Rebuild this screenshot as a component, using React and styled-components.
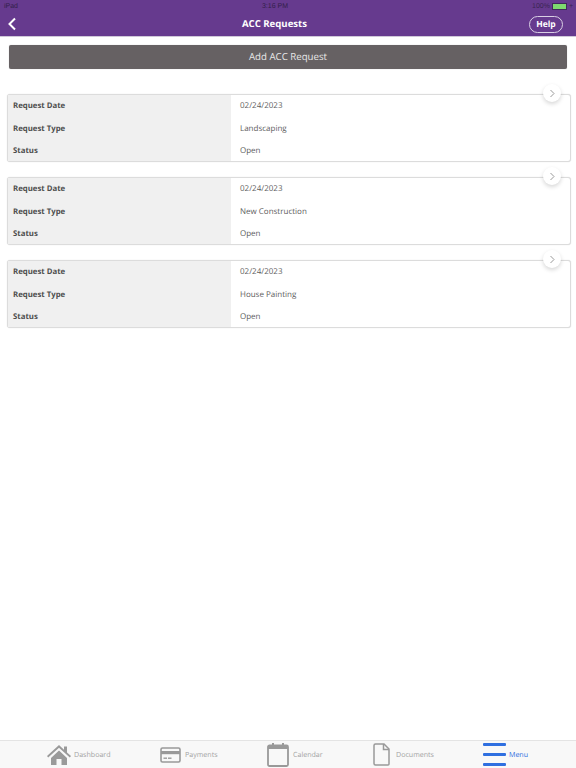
import React from "react";
import styled, { createGlobalStyle } from "styled-components";

const Global = createGlobalStyle`
  html, body { margin: 0; padding: 0; background: #fff; }
  body { font-family: "Open Sans", "Liberation Sans", sans-serif; text-rendering: geometricPrecision; }
`;
const Page = styled.div`
  width: 576px; height: 768px; display: flex; flex-direction: column; overflow: hidden; background: #fff;
`;
const Header = styled.header`
  height: 37px; flex: none; box-sizing: border-box; background: #663a8e; border-bottom: 1px solid #cfc8d8; display: flex; flex-direction: column;
`;
const StatusBar = styled.div`
  height: 12px; padding: 0 3px 0 4px; display: flex; align-items: center; justify-content: space-between;
  font-family: "Liberation Sans", sans-serif; font-size: 7px; color: #33204a;
`;
const BatteryWrap = styled.div`
  display: flex; align-items: center; gap: 2px; color: #3a2552;
`;
const Battery = styled.span`
  width: 13px; height: 5px; background: #7ed96f; border: 0.5px solid #40295a; display: block;
`;
const NavBar = styled.div`
  flex: 1; display: flex; align-items: center; justify-content: space-between; padding: 0 13px 0 7px; position: relative;
`;
const Title = styled.h1`
  position: absolute; left: 0; right: 27px; margin: 0; text-align: center; font-size: 9.6px; font-weight: 700; color: #fff; line-height: 24px;
`;
const HelpButton = styled.div`
  width: 32px; height: 15px; border: 1px solid #d9cfe4; border-radius: 9px; color: #fff; font-size: 8.5px; font-weight: 700;
  display: flex; align-items: center; justify-content: center;
`;
const Content = styled.main`
  flex: 1; display: flex; flex-direction: column; padding: 8px 5px 0 7px;
`;
const AddButton = styled.div`
  margin: 0 4px 0 2px; height: 24px; background: #666163; border-radius: 2px; color: #e8e8e8; font-size: 9.7px; padding-bottom: 1px; box-sizing: border-box;
  display: flex; align-items: center; justify-content: center; box-shadow: 0 0 1px rgba(0,0,0,.3);
`;
const CardList = styled.div`
  margin-top: 25px; display: flex; flex-direction: column; gap: 15px;
`;
const Card = styled.section`
  position: relative; height: 68px; box-sizing: border-box; border: 1px solid #dcdcdc; border-radius: 3px;
  display: grid; grid-template-columns: 223px 1fr; grid-template-rows: 66px; background: #fff; box-shadow: 0 0 1px rgba(0,0,0,.18);
`;
const Labels = styled.div`
  background: #f0f0f0; padding: 2px 5px 0; display: flex; flex-direction: column; justify-content: center; min-height: 0;
`;
const Values = styled.div`
  padding: 2px 9px 0; display: flex; flex-direction: column; justify-content: center; min-height: 0;
`;
const Label = styled.div`
  flex: none; height: 22.4px; line-height: 22.4px; font-size: 7.8px; font-weight: 700; color: #4d4d4d;
`;
const Value = styled.div`
  flex: none; height: 22.4px; line-height: 22.4px; font-size: 8px; color: #5c5c5c;
`;
const Chevron = styled.div`
  position: absolute; top: -11px; right: 9px; width: 18px; height: 18px; border-radius: 50%; background: #fff;
  box-shadow: 0 2px 4px rgba(0,0,0,.16); display: flex; align-items: center; justify-content: center;
`;
const TabBar = styled.nav`
  height: 28px; flex: none; box-sizing: border-box; background: #f8f8f8; border-top: 1px solid #e4e4e4;
  display: flex; padding-left: 47px;
`;
const Tab = styled.div`
  width: ${p => p.$w}px; flex: none; display: flex; align-items: center; gap: ${p => p.$gap}px;
  font-size: 7.1px; color: ${p => (p.$active ? "#2f6fe0" : "#a3a3a3")};
`;

const Back = () => (
  <svg width="10" height="14" viewBox="0 0 10 14"><path d="M8 1.500 2.500 7 8 12.500" fill="none" stroke="#fff" strokeWidth="2" /></svg>
);
const ChevronIcon = () => (
  <svg width="7" height="9" viewBox="0 0 7 9"><path d="M1.500 1 5 4.500 1.500 8" fill="none" stroke="#999" strokeWidth="1" /></svg>
);
const HomeIcon = () => (
  <svg width="24" height="20" viewBox="0 0 24 20" fill="#9a9a9a">
    <path d="M12 0 0 11l1.200 1.400L12 2.800l10.800 9.600L24 11l-4-3.600V1.500h-3v3.200z" />
    <path d="M4 13 12 5.500l8 7.500v7h-5.500v-6h-5v6H4z" />
  </svg>
);
const CardIcon = () => (
  <svg width="21" height="16" viewBox="0 0 21 16">
    <rect x="1" y="1" width="19" height="14" rx="1.500" fill="none" stroke="#999" strokeWidth="1.600" />
    <rect x="1" y="4" width="19" height="3.200" fill="#999" />
    <rect x="3.500" y="10.500" width="3.500" height="1.400" fill="#999" />
    <rect x="8" y="10.500" width="3.500" height="1.400" fill="#999" />
  </svg>
);
const CalendarIcon = () => (
  <svg width="22" height="24" viewBox="0 0 22 24">
    <rect x="1" y="2.500" width="20" height="20.500" rx="1.500" fill="none" stroke="#999" strokeWidth="1.800" />
    <rect x="1" y="2.500" width="20" height="3.500" fill="#999" />
    <rect x="5" y="0" width="2" height="3" fill="#999" />
    <rect x="15" y="0" width="2" height="3" fill="#999" />
  </svg>
);
const DocIcon = () => (
  <svg width="17" height="23" viewBox="0 0 17 23">
    <path d="M2.500 1H11l5 5v15a1 1 0 0 1-1 1H2.500a1.500 1.500 0 0 1-1.500-1.500v-18A1.500 1.500 0 0 1 2.500 1Z" fill="none" stroke="#999" strokeWidth="1.500" />
    <path d="M10.500 1v5.500H16" fill="none" stroke="#999" strokeWidth="1.500" />
  </svg>
);
const MenuIcon = () => (
  <svg width="23" height="23" viewBox="0 0 23 23" fill="#2f6fe0">
    <rect y="0" width="23" height="3" rx="1" />
    <rect y="10" width="23" height="3" rx="1" />
    <rect y="20" width="23" height="3" rx="1" />
  </svg>
);

const requests = ["Landscaping", "New Construction", "House Painting"];
const tabs = [
  { name: "Dashboard", icon: <HomeIcon />, w: 113, gap: 3 },
  { name: "Payments", icon: <CardIcon />, w: 107, gap: 4 },
  { name: "Calendar", icon: <CalendarIcon />, w: 106, gap: 4 },
  { name: "Documents", icon: <DocIcon />, w: 110, gap: 6 },
  { name: "Menu", icon: <MenuIcon />, w: 60, gap: 3, active: true },
];

export default function App() {
  return (
    <Page>
      <Global />
      <Header>
        <StatusBar>
          <span>iPad</span>
          <span>3:16 PM</span>
          <BatteryWrap><span>100%</span><Battery /><span>+</span></BatteryWrap>
        </StatusBar>
        <NavBar>
          <Back />
          <Title>ACC Requests</Title>
          <HelpButton>Help</HelpButton>
        </NavBar>
      </Header>
      <Content>
        <AddButton>Add ACC Request</AddButton>
        <CardList>
          {requests.map(type => (
            <Card key={type}>
              <Labels>
                <Label>Request Date</Label>
                <Label>Request Type</Label>
                <Label>Status</Label>
              </Labels>
              <Values>
                <Value>02/24/2023</Value>
                <Value>{type}</Value>
                <Value>Open</Value>
              </Values>
              <Chevron><ChevronIcon /></Chevron>
            </Card>
          ))}
        </CardList>
      </Content>
      <TabBar>
        {tabs.map(t => (
          <Tab key={t.name} $w={t.w} $gap={t.gap} $active={t.active}>{t.icon}<span>{t.name}</span></Tab>
        ))}
      </TabBar>
    </Page>
  );
}
